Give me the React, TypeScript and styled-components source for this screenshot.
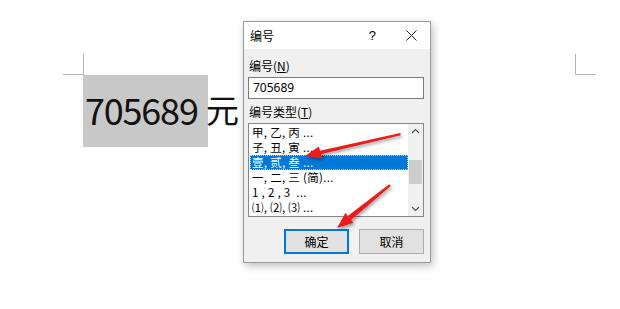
import React from 'react';
import styled, { createGlobalStyle } from 'styled-components';

const GlobalStyle = createGlobalStyle`
  html, body {
    margin: 0;
    padding: 0;
    background: #ffffff;
  }
  body {
    font-family: "Noto Sans CJK SC", "Noto Sans", sans-serif;
  }
`;

const listItems = [
  '甲, 乙, 丙 ...',
  '子, 丑, 寅 ...',
  '壹, 贰, 叁 ...',
  '一, 二, 三 (简)...',
  '1 , 2 , 3  ...',
  '⑴, ⑵, ⑶ ...',
];

const App = () => {
  return (
    <Page>
      <GlobalStyle />
      <MarkRow>
        <CornerMark $side="left" />
        <CornerMark $side="right" />
      </MarkRow>
      <DocLine>
        <Selected>705689</Selected>
        <Plain>&nbsp;元</Plain>
      </DocLine>

      <Dialog>
        <TitleBar>
          <TitleText>编号</TitleText>
          <TitleButtons>
            <Help>?</Help>
            <CloseIcon width="11" height="11" viewBox="0 0 11 11">
              <path d="M0.5 0.5 L10.5 10.5 M10.5 0.5 L0.5 10.5" stroke="#222" strokeWidth="1" />
            </CloseIcon>
          </TitleButtons>
        </TitleBar>
        <Body>
          <Label>编号(<u>N</u>)</Label>
          <TextInput>705689</TextInput>
          <Label $gap={6}>编号类型(<u>T</u>)</Label>
          <ListBox>
            <Items>
              {listItems.map((t, i) => (
                <Item key={t} $selected={i === 2}>{t}</Item>
              ))}
            </Items>
            <ScrollBar>
              <Chevron width="15" height="15" viewBox="0 0 15 15">
                <path d="M4 9 L7.5 5.5 L11 9" stroke="#555" strokeWidth="1.2" fill="none" />
              </Chevron>
              <Track>
                <Thumb />
              </Track>
              <Chevron width="15" height="15" viewBox="0 0 15 15">
                <path d="M4 6 L7.5 9.5 L11 6" stroke="#555" strokeWidth="1.2" fill="none" />
              </Chevron>
            </ScrollBar>
          </ListBox>
          <Buttons>
            <Button $primary>确定</Button>
            <Button>取消</Button>
          </Buttons>
        </Body>
      </Dialog>

      <Arrows width="620" height="309" viewBox="0 0 620 309">
        <defs>
          <filter id="sh" x="-20%" y="-20%" width="140%" height="140%">
            <feDropShadow dx="1.5" dy="2" stdDeviation="1.5" floodColor="#000" floodOpacity="0.35" />
          </filter>
        </defs>
        <g filter="url(#sh)" fill="#ec1c1c">
          <polygon points="400.3,133 400.7,135.2 320.6,154.2 319.9,150.8" />
          <polygon points="305,156 318.8,146.4 322.2,158.4" />
          <polygon points="389.2,184.2 390.8,186 351,220 347.8,216" />
          <polygon points="337,228 345.4,213 353.4,222.8" />
        </g>
      </Arrows>
    </Page>
  );
};

export default App;

const Page = styled.div`
  position: relative;
  width: 620px;
  height: 309px;
  overflow: hidden;
  background: #fff;
`;

const MarkRow = styled.div`
  display: flex;
  justify-content: space-between;
  padding: 54px 24px 0 63px;
`;

const CornerMark = styled.div<{ $side: 'left' | 'right' }>`
  width: 20px;
  height: 20px;
  border-bottom: 1px solid #b4b4b4;
  ${({ $side }) => ($side === 'left' ? 'border-right: 1px solid #b4b4b4;' : 'border-left: 1px solid #b4b4b4;')}
`;

const DocLine = styled.div`
  display: flex;
  align-items: stretch;
  margin-left: 83px;
  height: 72px;
  font-family: "Noto Sans CJK SC", "Noto Sans", sans-serif;
  font-size: 36px;
  color: #111;
`;

const Selected = styled.span`
  display: flex;
  align-items: center;
  background: #c8c8c8;
  padding: 0 10px 4px 2px;
  letter-spacing: -1.2px;
`;

const Plain = styled.span`
  display: flex;
  align-items: center;
  padding-bottom: 4px;
  margin-left: -9px;
  font-size: 33px;
`;

const Dialog = styled.div`
  position: absolute;
  left: 243px;
  top: 21px;
  width: 186px;
  height: 240px;
  border: 1px solid #9a9a9a;
  background: #f0f0f0;
  box-shadow: 2px 3px 8px rgba(0, 0, 0, 0.25);
  display: flex;
  flex-direction: column;
  font-size: 12px;
  color: #000;
`;

const TitleBar = styled.div`
  height: 27px;
  background: #fff;
  display: flex;
  align-items: center;
  justify-content: space-between;
  padding: 0 13px 0 6px;
`;

const TitleText = styled.span`
  font-size: 12px;
  line-height: 14px;
`;

const TitleButtons = styled.div`
  display: flex;
  align-items: center;
  gap: 30px;
`;

const Help = styled.span`
  font-family: "Liberation Sans", sans-serif;
  font-size: 13px;
  line-height: 14px;
`;

const CloseIcon = styled.svg`
  display: block;
`;

const Body = styled.div`
  display: flex;
  flex-direction: column;
  padding: 10px 5px 0 4px;
`;

const Label = styled.div<{ $gap?: number }>`
  height: 14px;
  line-height: 14px;
  margin-top: ${({ $gap }) => $gap ?? 0}px;
  margin-left: 1px;
  margin-bottom: 4px;
  & u {
    text-decoration-thickness: 1px;
    text-underline-offset: 1px;
  }
`;

const TextInput = styled.div`
  height: 20px;
  border: 1px solid #7a7a7a;
  background: #fff;
  padding: 0 4px;
  line-height: 20px;
  font-family: "Noto Sans", "Noto Sans CJK SC", sans-serif;
  font-size: 12px;
  box-sizing: content-box;
  width: 166px;
`;

const ListBox = styled.div`
  display: flex;
  height: 92px;
  width: 174px;
  border: 1px solid #828790;
  background: #fff;
`;

const Items = styled.div`
  flex: 1;
  display: flex;
  flex-direction: column;
  padding: 1px 0 0 1px;
`;

const Item = styled.div<{ $selected?: boolean }>`
  height: 15px;
  line-height: 15px;
  padding-left: 2px;
  font-size: 11.5px;
  letter-spacing: 0.3px;
  white-space: pre;
  overflow: hidden;
  box-sizing: border-box;
  background: ${({ $selected }) => ($selected ? '#0078d7' : 'transparent')};
  color: ${({ $selected }) => ($selected ? '#fff' : '#000')};
  outline: ${({ $selected }) => ($selected ? '1px dotted #b3d7f3' : 'none')};
  outline-offset: -1px;
`;

const ScrollBar = styled.div`
  width: 15px;
  display: flex;
  flex-direction: column;
  background: #f0f0f0;
`;

const Chevron = styled.svg`
  display: block;
  flex: none;
`;

const Track = styled.div`
  flex: 1;
  padding-top: 21px;
`;

const Thumb = styled.div`
  height: 24px;
  margin: 0 1px;
  background: #cdcdcd;
`;

const Buttons = styled.div`
  display: flex;
  justify-content: flex-end;
  gap: 10px;
  margin-top: 12px;
  padding-right: 1px;
`;

const Button = styled.div<{ $primary?: boolean }>`
  width: 65px;
  height: 25px;
  box-sizing: border-box;
  display: flex;
  align-items: center;
  justify-content: center;
  background: #e1e1e1;
  border: ${({ $primary }) => ($primary ? '2px solid #0078d7' : '1px solid #adadad')};
  font-size: 12px;
`;

const Arrows = styled.svg`
  position: absolute;
  left: 0;
  top: 0;
  pointer-events: none;
`;
